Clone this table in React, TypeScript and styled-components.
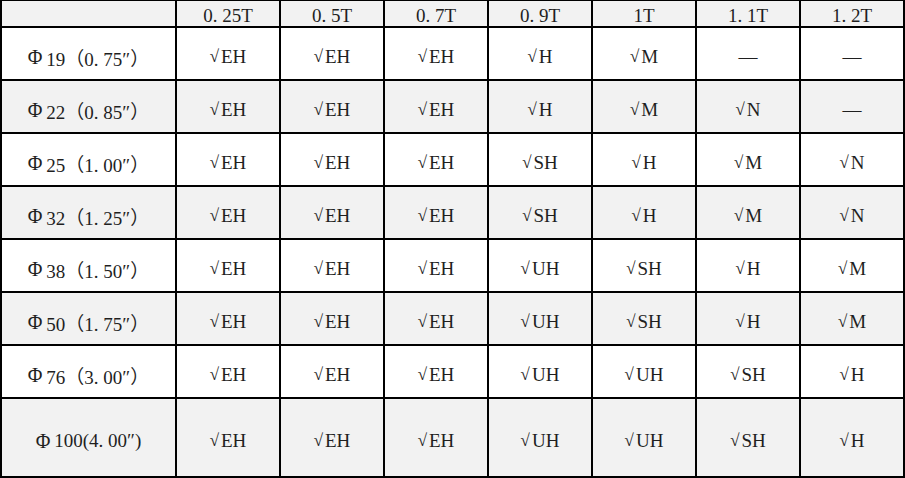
import React from 'react'
import styled, { createGlobalStyle } from 'styled-components'

const GlobalStyle = createGlobalStyle`
  html, body {
    margin: 0;
    padding: 0;
    background: #ffffff;
  }
  body {
    font-family: 'Liberation Serif', 'Noto Sans CJK SC', serif;
  }
`

const sizes = ['0. 25T', '0. 5T', '0. 7T', '0. 9T', '1T', '1. 1T', '1. 2T']

const rows = [
  { dia: '19', inch: '（0. 75″）', values: ['√EH', '√EH', '√EH', '√H', '√M', '—', '—'] },
  { dia: '22', inch: '（0. 85″）', values: ['√EH', '√EH', '√EH', '√H', '√M', '√N', '—'] },
  { dia: '25', inch: '（1. 00″）', values: ['√EH', '√EH', '√EH', '√SH', '√H', '√M', '√N'] },
  { dia: '32', inch: '（1. 25″）', values: ['√EH', '√EH', '√EH', '√SH', '√H', '√M', '√N'] },
  { dia: '38', inch: '（1. 50″）', values: ['√EH', '√EH', '√EH', '√UH', '√SH', '√H', '√M'] },
  { dia: '50', inch: '（1. 75″）', values: ['√EH', '√EH', '√EH', '√UH', '√SH', '√H', '√M'] },
  { dia: '76', inch: '（3. 00″）', values: ['√EH', '√EH', '√EH', '√UH', '√UH', '√SH', '√H'] },
  { dia: '100', inch: '(4. 00″)', values: ['√EH', '√EH', '√EH', '√UH', '√UH', '√SH', '√H'] },
]

const Table = styled.div`
  display: grid;
  grid-template-columns: 173px repeat(7, 102px);
  grid-template-rows: 25px repeat(7, 51px) 77px;
  gap: 2px;
  padding: 1px 2px 2px 2px;
  width: 905px;
  box-sizing: border-box;
  background: #000000;
`

const Cell = styled.div<{ $shade?: boolean }>`
  display: flex;
  align-items: center;
  justify-content: center;
  padding-top: 7px;
  box-sizing: border-box;
  background: ${(p) => (p.$shade ? '#f2f2f2' : '#ffffff')};
  color: #1f1f1f;
  font-size: 19px;
  white-space: nowrap;
`

const HeadCell = styled(Cell)`
  background: #f2f2f2;
  padding-top: 4px;
`

const Phi = styled.span`
  font-size: 20px;
  margin-right: 4px;
`

const Mark = styled.span`
  margin-right: 2px;
  font-weight: bold;
  font-size: 17px;
`

const Value = ({ text }: { text: string }) => {
  if (text.startsWith('√')) {
    return (
      <>
        <Mark>√</Mark>
        {text.slice(1)}
      </>
    )
  }
  return <>{text}</>
}

export default function App() {
  return (
    <>
      <GlobalStyle />
      <Table>
        <HeadCell />
        {sizes.map((s) => (
          <HeadCell key={s}>{s}</HeadCell>
        ))}
        {rows.map((row, i) => (
          <React.Fragment key={row.dia}>
            <Cell $shade={i % 2 === 1}>
              <Phi>Φ</Phi>
              {row.dia}
              {row.inch}
            </Cell>
            {row.values.map((v, j) => (
              <Cell key={j} $shade={i % 2 === 1}>
                <Value text={v} />
              </Cell>
            ))}
          </React.Fragment>
        ))}
      </Table>
    </>
  )
}
